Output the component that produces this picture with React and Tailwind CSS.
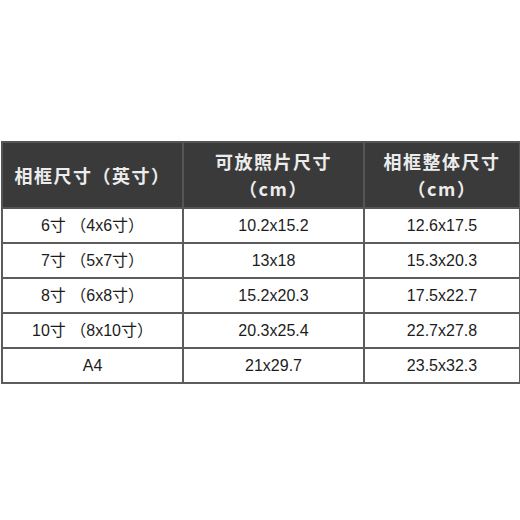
const rows = [
  ["6寸 （4x6寸）", "10.2x15.2", "12.6x17.5"],
  ["7寸 （5x7寸）", "13x18", "15.3x20.3"],
  ["8寸 （6x8寸）", "15.2x20.3", "17.5x22.7"],
  ["10寸 （8x10寸）", "20.3x25.4", "22.7x27.8"],
  ["A4", "21x29.7", "23.5x32.3"],
];

export default function App() {
  return (
    <div className="w-[520px] h-[520px] bg-white pt-[141px] px-[1px]">
      <table className="w-[518px] border-collapse table-fixed">
        <colgroup>
          <col className="w-[181px]" />
          <col className="w-[181px]" />
          <col className="w-[156px]" />
        </colgroup>
        <thead>
          <tr className="h-[66px] bg-[#3a3a3a] text-[#ececec] text-[18px] font-bold tracking-[1.5px] leading-[27px] font-['Noto_Sans_CJK_SC',sans-serif]">
            <th className="border-2 border-[#555] text-center align-middle">相框尺寸（英寸）</th>
            <th className="border-2 border-[#555] text-center align-middle">
              <div>可放照片尺寸</div>
              <div>（cm）</div>
            </th>
            <th className="border-2 border-[#555] text-center align-middle">
              <div>相框整体尺寸</div>
              <div>（cm）</div>
            </th>
          </tr>
        </thead>
        <tbody>
          {rows.map((r, i) => (
            <tr key={i} className="h-[35px] text-[16px] text-[#1c1c1c] font-['Liberation_Sans','Noto_Sans_CJK_SC',sans-serif]">
              {r.map((c, j) => (
                <td key={j} className="border-2 border-[#5c5c5c] text-center align-middle">{c}</td>
              ))}
            </tr>
          ))}
        </tbody>
      </table>
    </div>
  );
}
